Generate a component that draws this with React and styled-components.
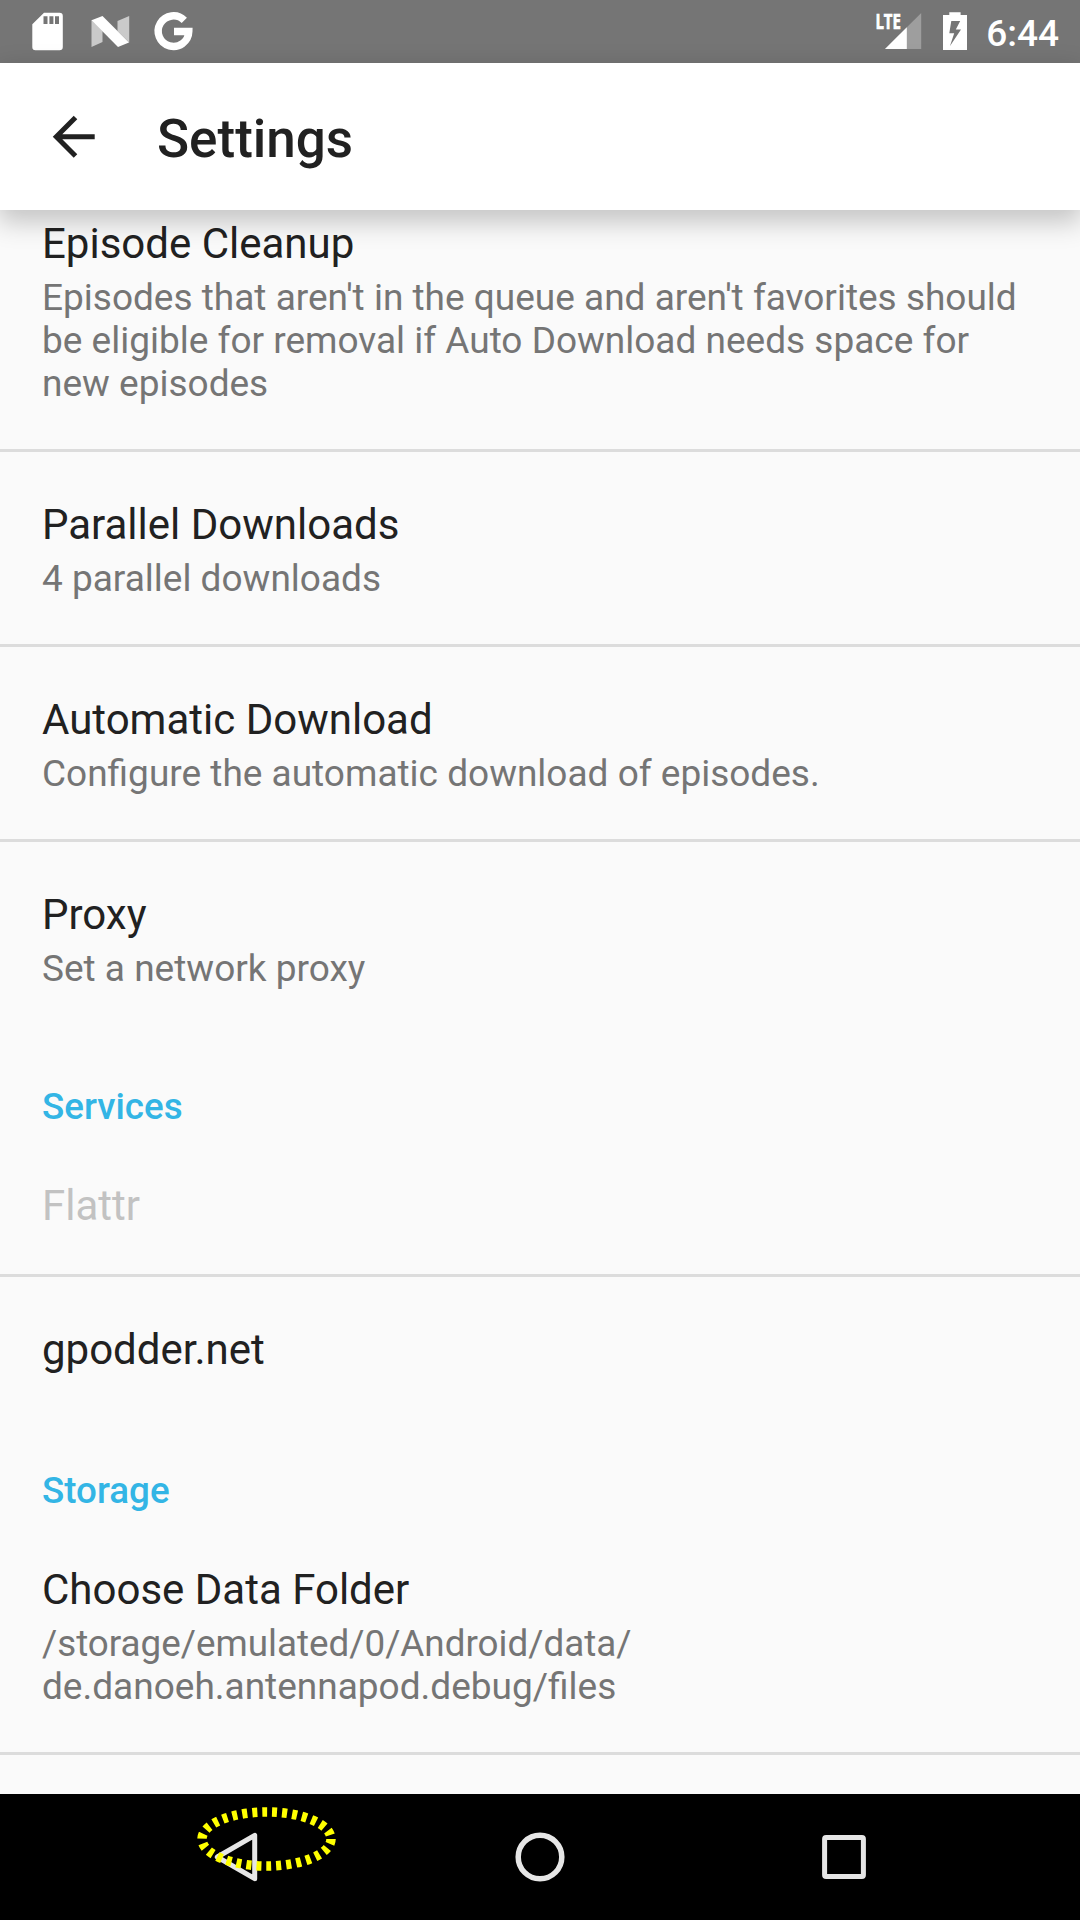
import React from "react";
import styled, { createGlobalStyle } from "styled-components";

const Global = createGlobalStyle`
  *, *::before, *::after { box-sizing: border-box; }
  body {
    margin: 0;
    background: #fafafa;
    font-family: Roboto, "Noto Sans", sans-serif;
  }
`;

const Screen = styled.div`
  display: flex;
  flex-direction: column;
  width: 1080px;
  height: 1920px;
  overflow: hidden;
  background: #fafafa;
`;

const StatusBar = styled.div`
  display: flex;
  flex: none;
  justify-content: space-between;
  height: 63px;
  padding: 0 21px 0 32px;
  background: #757575;
  color: #fff;
`;

const StatusGroup = styled.div`
  display: flex;
  align-items: flex-start;
  gap: ${(p) => p.$gap}px;
`;

const Icon = styled.svg`
  display: block;
  flex: none;
  overflow: visible;
`;

const Clock = styled.span`
  margin-left: -2px;
  font-size: 37px;
  font-weight: 500;
  line-height: 43px;
  padding-top: 12px;
`;

const Toolbar = styled.header`
  position: relative;
  z-index: 1;
  display: flex;
  flex: none;
  align-items: center;
  gap: 62px;
  height: 147px;
  padding-left: 53px;
  background: #fff;
  box-shadow: 0 10px 25px 2px rgba(0, 0, 0, 0.22);
`;

const Title = styled.h1`
  margin: 5px 0 0;
  color: #212121;
  font-size: 53px;
  font-weight: 500;
  line-height: 62px;
`;

const List = styled.main`
  flex: 1;
  min-height: 0;
  overflow: hidden;
`;

const Item = styled.div`
  padding: ${(p) => (p.$clipped ? 9 : 48)}px 42px 44px;
`;

const ItemTitle = styled.div`
  color: ${(p) => (p.$disabled ? "#c2c2c2" : "#212121")};
  font-size: 42px;
  line-height: 49px;
`;

const Summary = styled.div`
  margin-top: 8px;
  color: #757575;
  font-size: 37px;
  line-height: 43px;
  white-space: pre-line;
`;

const PathLine = styled.span`
  display: block;
  font-size: 36.8px;
  word-break: break-all;
`;

const Divider = styled.div`
  height: 3px;
  background: #dcdcdc;
`;

const SectionHeader = styled.h2`
  margin: 0;
  padding: 51px 42px 5px;
  color: #33b5e5;
  font-size: 36.75px;
  font-weight: 500;
  line-height: 43px;
`;

const NavBar = styled.nav`
  position: relative;
  display: flex;
  flex: none;
  align-items: center;
  justify-content: center;
  height: 126px;
  background: #000;
`;

const NavButton = styled.div`
  display: flex;
  justify-content: center;
  width: 304px;
`;

const TouchMark = styled.svg`
  position: absolute;
  left: 196px;
  top: 12px;
`;

function Preference({ title, summary, disabled, clipped }) {
  return (
    <Item $clipped={clipped}>
      <ItemTitle $disabled={disabled}>{title}</ItemTitle>
      {summary && <Summary>{summary}</Summary>}
    </Item>
  );
}

const SdCardIcon = () => (
  <Icon width="31" height="63" viewBox="0 0 31 63">
    <path
      fill="#fff"
      fillRule="evenodd"
      d="M12 12.7H27.5a3.3 3.3 0 0 1 3.3 3.3V47a3.3 3.3 0 0 1-3.3 3.3H3.5A3.3 3.3 0 0 1 .3 47V24.3zM11.5 16.3v7.7h4v-7.7zM17.4 16.3v7.7h4v-7.7zM23 16.3v7.7h4v-7.7z"
    />
  </Icon>
);

const NougatIcon = () => (
  <Icon width="35.5" height="63" viewBox="0 0 35.5 63">
    <path fill="#fff" opacity=".62" d="M.5 20L11.5 31V42L.5 47zM26.5 21L38.2 16V42.5L26.5 31z" />
    <path fill="#fff" d="M.5 20.2L11.5 16 38 42.5 27 47z" />
  </Icon>
);

const GoogleIcon = () => (
  <Icon width="38" height="63" viewBox="0 0 38 63">
    <path
      fill="none"
      stroke="#fff"
      strokeWidth="7.4"
      d="M29.3 20.3A15.3 15.3 0 1 0 33.8 31.5H19"
    />
  </Icon>
);

const SignalIcon = () => (
  <Icon width="46" height="63" viewBox="0 0 46 63">
    <path fill="#9e9e9e" d="M45.2 13V49H9z" />
    <path fill="#fff" d="M30.8 27.3V49H9z" />
    <text
      x="-.6"
      y="28.8"
      fill="#fff"
      stroke="#fff"
      strokeWidth=".7"
      fontFamily="Open Sans, sans-serif"
      fontSize="21.5"
      fontWeight="700"
      textLength="25.5"
      lengthAdjust="spacingAndGlyphs"
    >
      LTE
    </text>
  </Icon>
);

const BatteryIcon = () => (
  <Icon width="24" height="63" viewBox="0 0 24 63">
    <path
      fill="#fff"
      fillRule="evenodd"
      d="M6.3 12.3H17.6V15H24V50H0V15H6.3zM8.3 21L6.3 33.3H11.2L7 46 18 29.5H12.8L17.2 21z"
    />
  </Icon>
);

const BackArrowIcon = () => (
  <Icon width="42" height="42" viewBox="0 0 42 42">
    <path fill="none" stroke="#212121" strokeWidth="5" d="M41.7 20.7H4M22.5 1.5L3.3 20.7L22.5 39.9" />
  </Icon>
);

const items = [
  {
    title: "Episode Cleanup",
    summary:
      "Episodes that aren't in the queue and aren't favorites should\nbe eligible for removal if Auto Download needs space for\nnew episodes",
    clipped: true,
  },
  { title: "Parallel Downloads", summary: "4 parallel downloads" },
  { title: "Automatic Download", summary: "Configure the automatic download of episodes." },
  { title: "Proxy", summary: "Set a network proxy" },
];

export default function App() {
  return (
    <>
      <Global />
      <Screen>
        <StatusBar>
          <StatusGroup $gap={28}>
            <SdCardIcon />
            <NougatIcon />
            <GoogleIcon />
          </StatusGroup>
          <StatusGroup $gap={21}>
            <SignalIcon />
            <BatteryIcon />
            <Clock>6:44</Clock>
          </StatusGroup>
        </StatusBar>
        <Toolbar>
          <BackArrowIcon />
          <Title>Settings</Title>
        </Toolbar>
        <List>
          {items.map((item, i) => (
            <React.Fragment key={item.title}>
              {i > 0 && <Divider />}
              <Preference {...item} />
            </React.Fragment>
          ))}
          <SectionHeader>Services</SectionHeader>
          <Preference title="Flattr" disabled />
          <Divider />
          <Preference title="gpodder.net" />
          <SectionHeader>Storage</SectionHeader>
          <Preference
            title="Choose Data Folder"
            summary={
              <>
                <PathLine>/storage/emulated/0/Android/data/</PathLine>
                de.danoeh.antennapod.debug/files
              </>
            }
          />
          <Divider />
        </List>
        <NavBar>
          <NavButton>
            <Icon width="50" height="50" viewBox="0 0 50 50">
              <path
                fill="none"
                stroke="#e6e6e6"
                strokeWidth="5"
                strokeLinejoin="round"
                d="M6.3 25L43.7 3.3V46.7z"
              />
            </Icon>
          </NavButton>
          <NavButton>
            <Icon width="50" height="50" viewBox="0 0 50 50">
              <circle cx="25" cy="25" r="21.8" fill="none" stroke="#e6e6e6" strokeWidth="5.5" />
            </Icon>
          </NavButton>
          <NavButton>
            <Icon width="50" height="50" viewBox="0 0 50 50">
              <rect x="5.6" y="5.6" width="38.8" height="38.8" rx="1.5" fill="none" stroke="#e6e6e6" strokeWidth="5" />
            </Icon>
          </NavButton>
          <TouchMark width="142" height="66" viewBox="0 0 142 66">
            <ellipse
              cx="70.5"
              cy="33"
              rx="64.5"
              ry="27"
              fill="none"
              stroke="#ff0"
              strokeWidth="9.5"
              strokeDasharray="5 5"
            />
          </TouchMark>
        </NavBar>
      </Screen>
    </>
  );
}
